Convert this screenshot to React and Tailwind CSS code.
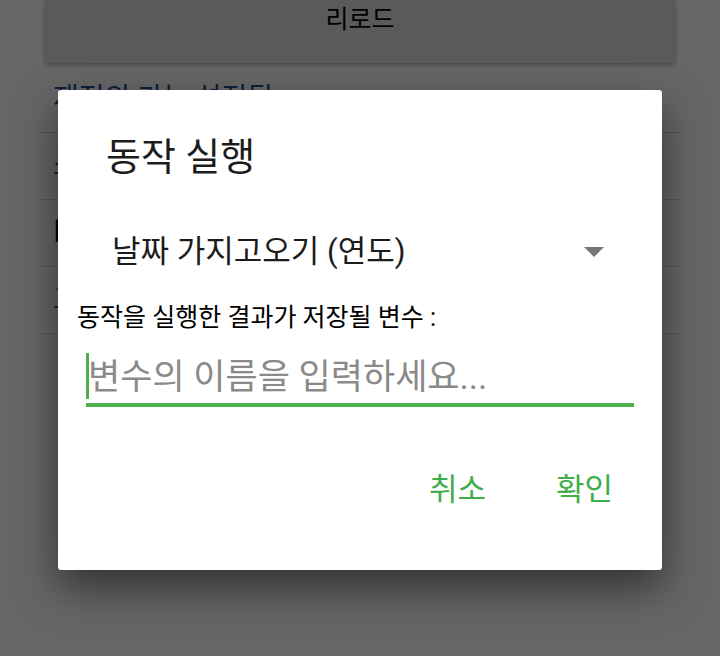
import React, { useState } from 'react';

const rows = [
  { text: '재정의 가능 설정됨', color: 'text-[#1f4f9c]' },
  { text: '쇼핑 목록 보기', color: 'text-[#1f4f9c]' },
  { text: '■ 기본 동작', color: 'text-black' },
  { text: '고급 설정 열기', color: 'text-[#1f4f9c]' },
];

function App() {
  const [varName, setVarName] = useState('');

  return (
    <div className="relative h-[656px] w-[720px] overflow-hidden bg-white font-['Roboto','Noto_Sans_CJK_KR',sans-serif]">
      {/* page behind the dialog */}
      <div className="px-[45px]">
        <button className="flex h-[63px] w-full items-start justify-center rounded-b bg-[#e0e0e0] pt-[7px] text-[25px] leading-[26px] text-black shadow-[0_2px_4px_rgba(0,0,0,0.3)]">
          리로드
        </button>
      </div>
      <div className="mt-[3px] px-[40px]">
        {rows.map((row, i) => (
          <div
            key={i}
            className={`flex h-[67px] items-center border-b border-[#d4d4d4] px-[13px] text-[28px] ${row.color}`}
          >
            {row.text}
          </div>
        ))}
      </div>

      {/* dim + dialog */}
      <div className="absolute inset-0 flex items-center justify-center bg-black/60">
        <div className="mt-[4px] flex h-[480px] w-[604px] flex-col rounded-[3px] bg-white shadow-[0_18px_40px_rgba(0,0,0,0.5)]">
          <div className="mt-[47px] flex h-[40px] items-center pl-[48px] text-[38px] text-[#1c1c1c]">
            동작 실행
          </div>

          <div className="mt-[55px] flex h-[40px] items-center justify-between pl-[54px] pr-[58px] text-[31px] text-[#1c1c1c]">
            <span>날짜 가지고오기 (연도)</span>
            <svg width="20" height="10" viewBox="0 0 20 10">
              <polygon points="0,0 20,0 10,10" fill="#777777" />
            </svg>
          </div>

          <div className="mt-[34px] flex h-[24px] items-center pl-[19px] text-[25px] text-black">
            동작을 실행한 결과가 저장될 변수 :
          </div>

          <div className="relative mx-[28px] mt-[23px] flex h-[54px] items-center border-b-[4px] border-[#4caf50]">
            <span className="absolute left-0 top-0 h-[46px] w-[3px] bg-[#4caf50]" />
            <input
              value={varName}
              onChange={(e) => setVarName(e.target.value)}
              placeholder="변수의 이름을 입력하세요..."
              className="w-full bg-transparent pl-[2px] text-[35px] text-[#212121] outline-none placeholder:text-[#8a8a8a]"
            />
          </div>

          <div className="mt-[63px] flex h-[40px] items-center justify-end gap-[70px] pr-[49px] text-[31px] text-[#3fae49]">
            <button>취소</button>
            <button>확인</button>
          </div>
        </div>
      </div>
    </div>
  );
}

export default App;
